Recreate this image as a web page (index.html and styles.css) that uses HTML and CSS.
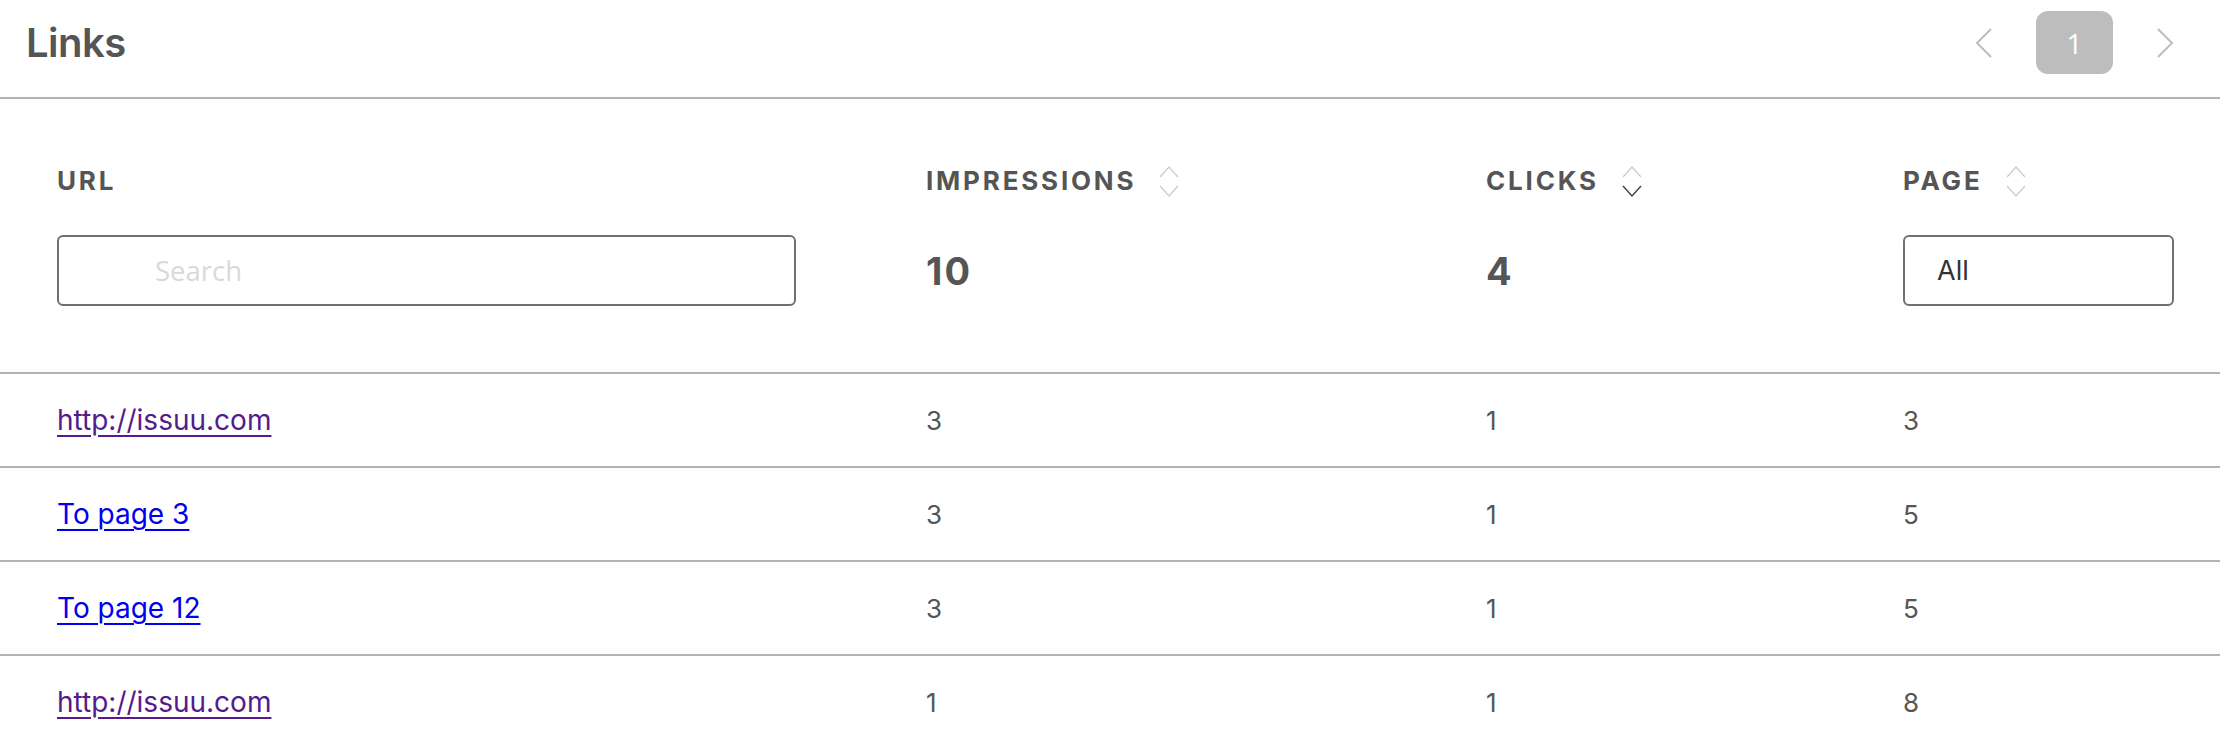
FILE: index.html
```html
<!DOCTYPE html>
<html lang="en">
<head>
<meta charset="utf-8">
<title>Links</title>
<link rel="stylesheet" href="styles.css">
</head>
<body>
<section class="card">
  <header class="card-head">
    <h1 class="title">Links</h1>
    <nav class="pager">
      <svg class="pager-arrow" width="20" height="32" viewBox="0 0 20 32"><polyline points="17,2 3,16 17,30" fill="none" stroke="#bdbdbd" stroke-width="2"/></svg>
      <span class="pager-page">1</span>
      <svg class="pager-arrow" width="20" height="32" viewBox="0 0 20 32"><polyline points="3,2 17,16 3,30" fill="none" stroke="#bdbdbd" stroke-width="2"/></svg>
    </nav>
  </header>
  <table class="links-table">
    <colgroup>
      <col class="c-url"><col class="c-imp"><col class="c-clk"><col class="c-page">
    </colgroup>
    <thead>
      <tr>
        <th class="col-url">
          <div class="th-label">URL</div>
          <input class="search" type="text" placeholder="Search">
        </th>
        <th>
          <div class="th-label">IMPRESSIONS
            <svg class="sort" width="20" height="34" viewBox="0 0 20 34"><polyline points="1,12 10,2 19,12" fill="none" stroke="#cfcfcf" stroke-width="1.5"/><polyline points="1,21 10,31 19,21" fill="none" stroke="#cfcfcf" stroke-width="1.5"/></svg>
          </div>
          <div class="th-value">10</div>
        </th>
        <th>
          <div class="th-label">CLICKS
            <svg class="sort" width="20" height="34" viewBox="0 0 20 34"><polyline points="1,12 10,2 19,12" fill="none" stroke="#cfcfcf" stroke-width="1.5"/><polyline points="1,21 10,31 19,21" fill="none" stroke="#444" stroke-width="1.5"/></svg>
          </div>
          <div class="th-value">4</div>
        </th>
        <th class="col-page">
          <div class="th-label">PAGE
            <svg class="sort" width="20" height="34" viewBox="0 0 20 34"><polyline points="1,12 10,2 19,12" fill="none" stroke="#cfcfcf" stroke-width="1.5"/><polyline points="1,21 10,31 19,21" fill="none" stroke="#cfcfcf" stroke-width="1.5"/></svg>
          </div>
          <div class="select">All</div>
        </th>
      </tr>
    </thead>
    <tbody>
      <tr><td class="col-url"><a class="visited" href="#">http://issuu.com</a></td><td>3</td><td>1</td><td class="col-page">3</td></tr>
      <tr><td class="col-url"><a class="link" href="#">To page 3</a></td><td>3</td><td>1</td><td class="col-page">5</td></tr>
      <tr><td class="col-url"><a class="link" href="#">To page 12</a></td><td>3</td><td>1</td><td class="col-page">5</td></tr>
      <tr><td class="col-url"><a class="visited" href="#">http://issuu.com</a></td><td>1</td><td>1</td><td class="col-page">8</td></tr>
    </tbody>
  </table>
</section>
</body>
</html>
```

FILE: styles.css
```css
* { box-sizing: border-box; }
html, body { margin: 0; padding: 0; background: #fff; }
body { font-family: Inter, "Liberation Sans", sans-serif; color: #555; }

.card { width: 2220px; }

.card-head {
  display: flex;
  align-items: center;
  justify-content: space-between;
  height: 99px;
  padding: 11px 45px 23px 26px;
  border-bottom: 2px solid #b3b3b3;
}
.title {
  margin: 0;
  font-size: 40px;
  line-height: 63px;
  font-weight: 600;
  color: #555;
  letter-spacing: -0.5px;
}
.pager { display: flex; align-items: center; gap: 42px; }
.pager-arrow { display: block; }
.pager-page {
  width: 77px;
  height: 63px;
  border-radius: 12px;
  background: #bdbdbd;
  color: #fff;
  font-family: "Open Sans", sans-serif;
  font-size: 28px;
  display: flex;
  align-items: center;
  justify-content: center;
}

.links-table {
  width: 2220px;
  border-collapse: collapse;
  table-layout: fixed;
}
.c-url { width: 926px; }
.c-imp { width: 560px; }
.c-clk { width: 417px; }
.c-page { width: 317px; }

th {
  text-align: left;
  vertical-align: top;
  padding: 62px 0 66px;
  border-bottom: 2px solid #b3b3b3;
  font-weight: 400;
}
th.col-url { padding-left: 57px; padding-right: 130px; }
th.col-page { padding-right: 46px; }

.th-label {
  display: flex;
  align-items: center;
  gap: 23px;
  height: 38px;
  font-size: 26px;
  font-weight: 700;
  letter-spacing: 2.8px;
  color: #555;
  margin-bottom: 36px;
}
.sort { display: block; margin-top: 4px; }

.th-value {
  height: 71px;
  display: flex;
  align-items: center;
  font-size: 38px;
  font-weight: 700;
  letter-spacing: 2px;
  color: #555;
}

.search {
  display: block;
  width: 100%;
  height: 71px;
  border: 2px solid #707070;
  border-radius: 6px;
  padding: 0 0 0 96px;
  font-family: "Open Sans", sans-serif;
  font-size: 27.5px;
  color: #333;
  outline: none;
}
.search::placeholder { color: #d9d9d9; }

.select {
  height: 71px;
  border: 2px solid #707070;
  border-radius: 6px;
  padding-left: 32px;
  display: flex;
  align-items: center;
  font-size: 27px;
  color: #333;
}

td {
  height: 94px;
  padding: 0;
  border-bottom: 2px solid #b3b3b3;
  font-size: 26px;
  color: #555;
  vertical-align: middle;
}
td.col-url { padding-left: 57px; }

a {
  font-size: 28px;
  text-decoration: underline;
  text-decoration-thickness: 2px;
  text-underline-offset: 5px;
}
a.visited { color: #551a8b; }
a.link { color: #0000ee; }
```
